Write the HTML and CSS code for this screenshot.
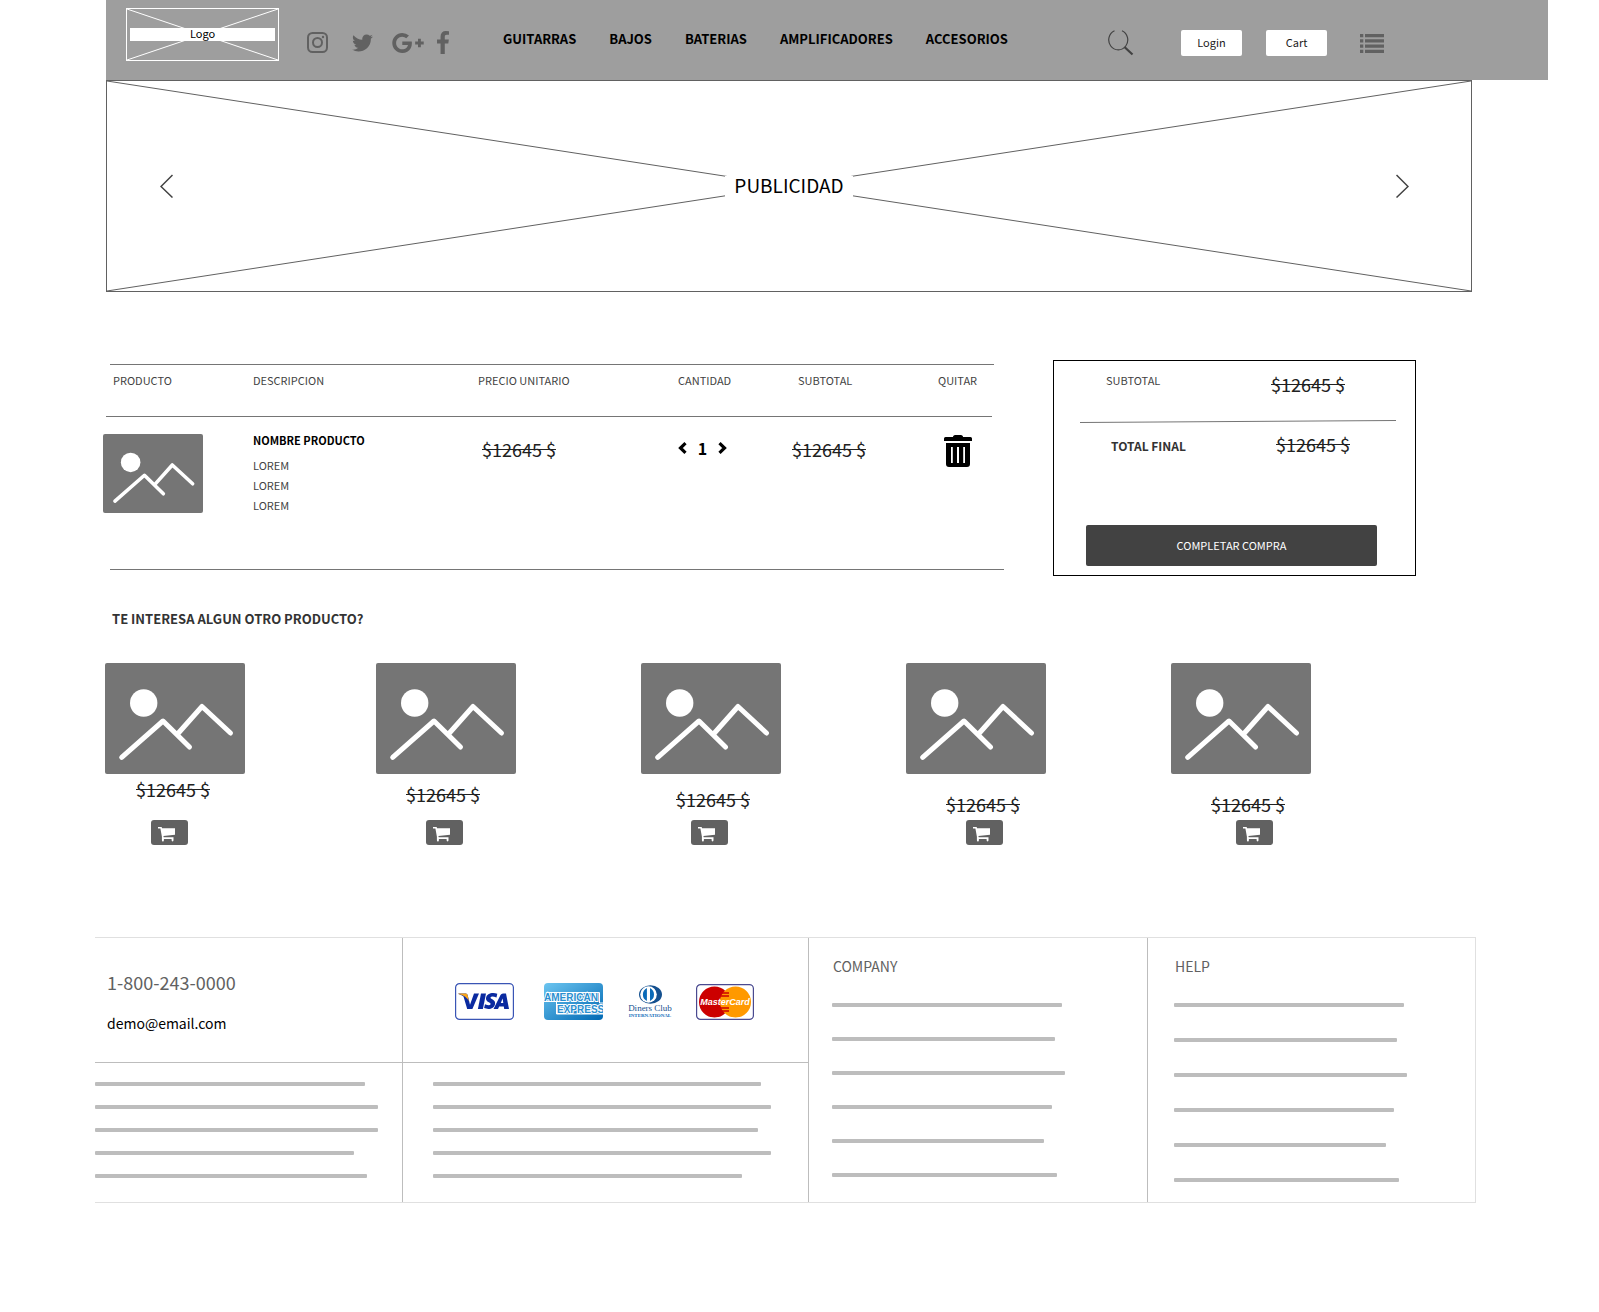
FILE: index.html
```html
<!DOCTYPE html>
<html lang="es">
<head>
<meta charset="utf-8">
<meta name="viewport" content="width=device-width, initial-scale=1">
<title>Carrito de compra</title>
<link rel="stylesheet" href="styles.css">
</head>
<body>
<svg class="sprite" aria-hidden="true">
  <symbol id="placeholder" viewBox="0 0 140 111" preserveAspectRatio="none">
    <rect width="140" height="111" fill="#757575"/>
    <circle cx="38.700" cy="40" r="13.700" fill="#fff"/>
    <path d="M16.700 94.300 58 58l26.500 26M73 70.500 97 43.500l28.500 26.500" fill="none" stroke="#fff" stroke-width="5" stroke-linecap="round" stroke-linejoin="round"/>
  </symbol>
  <symbol id="cart" viewBox="0 0 17 15">
    <path d="M0 0h3.600l.5 1.200H17v6.600L5.400 9l.3 1.200H15.500v2.600q.2 1.700-.9 1.700t-1-1.700v-.9H5.900v1q.1 1.700-1 1.700t-1-1.700V9.800L2.400 1.500H0z"/>
  </symbol>
</svg>

<header class="topbar">
  <a class="logo" href="#" aria-label="Logo">
    <svg class="logo-cross" viewBox="0 0 100 100" preserveAspectRatio="none" aria-hidden="true"><path d="M0 0 100 100M100 0 0 100"/></svg>
    <span class="logo-name">Logo</span>
  </a>
  <div class="social">
    <a href="#" aria-label="Instagram"><svg width="21" height="21" viewBox="0 0 21 21" fill="none" stroke="#616161" stroke-width="2"><rect x="1" y="1" width="19" height="19" rx="4.500"/><circle cx="10.500" cy="10.500" r="4.500"/><circle cx="16" cy="5" r="1.200" fill="#616161" stroke="none"/></svg></a>
    <a href="#" aria-label="Twitter"><svg width="21" height="18" viewBox="108 256 1576 1280" fill="#616161"><path d="M1684 408q-67 98-162 167 1 14 1 42 0 130-38 259.500t-115.500 248.500-184.500 210.500-258 146-323 54.500q-271 0-496-145 35 4 78 4 225 0 401-138-105-2-188-64.500t-114-159.500q33 5 61 5 43 0 85-11-112-23-185.500-111.500t-73.500-205.500v-4q68 38 146 41-66-44-105-115t-39-154q0-88 44-163 121 149 294.500 238.500t371.500 99.500q-8-38-8-74 0-134 94.500-228.500t228.500-94.500q140 0 236 102 109-21 205-78-37 115-142 178 93-10 186-50z"/></svg></a>
    <a href="#" aria-label="Google Plus"><svg width="32" height="20" viewBox="0 163 2304 1466" fill="#616161"><path d="M1437 913q0 208-87 370.500t-248 254-369 91.500q-149 0-285-58t-234-156-156-234-58-285 58-285 156-234 234-156 285-58q286 0 491 192l-199 191q-117-113-292-113-123 0-227.500 62t-165.500 168.500-61 232.500 61 232.500 165.500 168.500 227.500 62q83 0 152.500-23t114.500-57.500 78.500-78.500 49-83 21.500-74h-416v-252h692q12 63 12 122zm867-122v210h-209v209h-210v-209h-209v-210h209v-209h210v209h209z"/></svg></a>
    <a href="#" aria-label="Facebook"><svg width="12" height="23" viewBox="479 0 864 1664" fill="#616161"><path d="M1343 12v264h-157q-86 0-116 36t-30 108v189h293l-39 296h-254v759h-306v-759h-255v-296h255v-218q0-186 104-288.500t277-102.500q147 0 228 12z"/></svg></a>
  </div>
  <nav class="menu">
    <a href="#">GUITARRAS</a>
    <a href="#">BAJOS</a>
    <a href="#">BATERIAS</a>
    <a href="#">AMPLIFICADORES</a>
    <a href="#">ACCESORIOS</a>
  </nav>
  <div class="actions">
    <button class="icon-button" type="button" aria-label="Buscar"><svg width="26" height="26" viewBox="0 0 26 26" fill="none" stroke="#424242"><path d="M6.500.7A9.500 10 0 1 0 14 .7" stroke-width="1.200"/><path d="m16.500 17 8 7.500" stroke-width="2.200"/></svg></button>
    <button class="small-button" type="button">Login</button>
    <button class="small-button" type="button">Cart</button>
    <button class="icon-button" type="button" aria-label="Lista"><svg width="24" height="19" viewBox="0 0 24 19" fill="#616161"><path d="M0 0h3.300v3.300H0zM5 0h19v3.300H5zM0 5.300h3.300v3.300H0zM5 5.300h19v3.300H5zM0 10.500h3.300v3.300H0zM5 10.500h19v3.300H5zM0 15.700h3.300V19H0zM5 15.700h19V19H5z"/></svg></button>
  </div>
</header>

<section class="banner" aria-label="Publicidad">
  <svg class="banner-cross" viewBox="0 0 100 100" preserveAspectRatio="none" aria-hidden="true"><path d="M0 0 100 100M100 0 0 100"/></svg>
  <button class="icon-button banner-prev" type="button" aria-label="Anterior"><svg width="13" height="24" viewBox="0 0 13 24"><path d="M12.500 1 1 12.500l11.500 11"/></svg></button>
  <span class="banner-label">PUBLICIDAD</span>
  <button class="icon-button banner-next" type="button" aria-label="Siguiente"><svg width="13" height="24" viewBox="0 0 13 24"><path d="m.5 1 11.500 11.500L.5 23.500"/></svg></button>
</section>

<main>
  <div class="checkout">
    <table class="basket">
      <colgroup><col class="col-product"><col><col class="col-price"><col class="col-quantity"><col class="col-subtotal"><col class="col-remove"></colgroup>
      <thead>
        <tr>
          <th class="product">PRODUCTO</th>
          <th>DESCRIPCION</th>
          <th>PRECIO UNITARIO</th>
          <th class="quantity">CANTIDAD</th>
          <th class="subtotal">SUBTOTAL</th>
          <th class="remove">QUITAR</th>
        </tr>
      </thead>
      <tbody>
        <tr>
          <td class="product"><svg class="thumb" width="100" height="79" role="img" aria-label="Producto"><use href="#placeholder"/></svg></td>
          <td class="description"><strong>NOMBRE PRODUCTO</strong><ul><li>LOREM</li><li>LOREM</li><li>LOREM</li></ul></td>
          <td class="unit-price"><s class="price">$12645 $</s></td>
          <td class="quantity">
            <div class="stepper">
              <button class="icon-button" type="button" aria-label="Menos"><svg width="9" height="12" viewBox="0 0 9 12"><path d="M7.500 1.200 2.500 6l5 4.800" fill="none" stroke="#000" stroke-width="3.200"/></svg></button>
              <output>1</output>
              <button class="icon-button" type="button" aria-label="Más"><svg width="9" height="12" viewBox="0 0 9 12"><path d="M1.500 1.200 6.500 6l-5 4.800" fill="none" stroke="#000" stroke-width="3.200"/></svg></button>
            </div>
          </td>
          <td class="subtotal"><s class="price">$12645 $</s></td>
          <td class="remove"><button class="icon-button" type="button" aria-label="Quitar"><svg width="28" height="32" viewBox="0 0 28 32"><path d="M9 2V1.500Q9.500 0 11 0h6q1.500 0 2 1.500V2h7.500Q28 2 28 3.500V6H0V3.500Q0 2 1.500 2z"/><path fill-rule="evenodd" d="M2 8h24v21q0 3-3 3H5q-3 0-3-3zM7 12v16h1.800V12zm6 0v16h2V12zm6.200 0v16H21V12z"/></svg></button></td>
        </tr>
      </tbody>
    </table>

    <aside class="summary">
      <dl>
        <div class="summary-row"><dt>SUBTOTAL</dt><dd><s class="price">$12645 $</s></dd></div>
        <div class="summary-row total"><dt>TOTAL FINAL</dt><dd><s class="price">$12645 $</s></dd></div>
      </dl>
      <svg class="summary-rule" viewBox="0 0 316 3" preserveAspectRatio="none" aria-hidden="true"><path d="M0 2.500 316 .5"/></svg>
      <button class="buy" type="button">COMPLETAR COMPRA</button>
    </aside>
  </div>

  <h2>TE INTERESA ALGUN OTRO PRODUCTO?</h2>
  <ul class="products">
    <li class="card card-1"><svg class="thumb" width="140" height="111" role="img" aria-label="Producto"><use href="#placeholder"/></svg><div class="card-price"><s class="price">$12645 $</s></div><button class="add" type="button" aria-label="Agregar al carrito"><svg width="17" height="15"><use href="#cart"/></svg></button></li>
    <li class="card card-2"><svg class="thumb" width="140" height="111" role="img" aria-label="Producto"><use href="#placeholder"/></svg><div class="card-price"><s class="price">$12645 $</s></div><button class="add" type="button" aria-label="Agregar al carrito"><svg width="17" height="15"><use href="#cart"/></svg></button></li>
    <li class="card card-3"><svg class="thumb" width="140" height="111" role="img" aria-label="Producto"><use href="#placeholder"/></svg><div class="card-price"><s class="price">$12645 $</s></div><button class="add" type="button" aria-label="Agregar al carrito"><svg width="17" height="15"><use href="#cart"/></svg></button></li>
    <li class="card card-4"><svg class="thumb" width="140" height="111" role="img" aria-label="Producto"><use href="#placeholder"/></svg><div class="card-price"><s class="price">$12645 $</s></div><button class="add" type="button" aria-label="Agregar al carrito"><svg width="17" height="15"><use href="#cart"/></svg></button></li>
    <li class="card card-5"><svg class="thumb" width="140" height="111" role="img" aria-label="Producto"><use href="#placeholder"/></svg><div class="card-price"><s class="price">$12645 $</s></div><button class="add" type="button" aria-label="Agregar al carrito"><svg width="17" height="15"><use href="#cart"/></svg></button></li>
  </ul>
</main>

<footer class="footer">
  <div class="contact">
    <a class="phone" href="tel:18002430000">1-800-243-0000</a>
    <a class="email" href="mailto:demo@email.com">demo@email.com</a>
  </div>
  <div class="payments">
    <svg width="59" height="37" viewBox="0 0 59 37" role="img" aria-label="Visa">
      <rect x=".6" y=".6" width="57.800" height="35.800" rx="4" fill="#fff" stroke="#3a55b5" stroke-width="1.200"/>
      <path d="M3.500 10.500h7.300q1.600 0 1.900 1.800l2.300 9.500 4-11.300h5L17.400 26h-5.200L8.500 13.500Q7 12 3.500 11z" fill="#0a2aa0"/>
      <path d="M3.500 10.500h7.300q1.600 0 1.900 1.800l1.200 6Q11 12.500 3.500 11z" fill="#f9a51a"/>
      <path d="M26 10.500h5L27.900 26h-5z" fill="#0a2aa0"/>
      <path d="M41.500 14.600q-5-2-6 0c-.6 1.800 5 1.800 4.600 5.800-.5 6-7.300 6.300-11 4.700l.9-3.900q4.600 2 5.600.1c.6-2-5-2-4.600-6 .5-5.300 7-6 11.300-4.500z" fill="#0a2aa0"/>
      <path fill-rule="evenodd" d="M38.500 26l7-14q.8-1.500 2.500-1.500h3L54 26h-4.800l-.4-2.500h-4.600L43 26zm7.300-6h2.500l-.7-4.500z" fill="#0a2aa0"/>
    </svg>
    <svg width="59" height="37" viewBox="0 0 59 37" role="img" aria-label="American Express">
      <defs><linearGradient id="amex" x1="0" y1="0" x2="1" y2="1"><stop offset="0" stop-color="#6cc5f0"/><stop offset="1" stop-color="#0068b3"/></linearGradient></defs>
      <rect width="59" height="37" rx="4" fill="url(#amex)"/>
      <path d="M5 9.500H55.500v10.500H59M0 18.500H12.500V31H59" fill="none" stroke="#fff"/>
      <text class="amex-text" x="0" y="18">AMERICAN</text>
      <text class="amex-text" x="13" y="30">EXPRESS</text>
    </svg>
    <svg width="45" height="33" viewBox="0 0 45 33" role="img" aria-label="Diners Club International">
      <ellipse cx="22.500" cy="9.500" rx="11.500" ry="9.300" fill="#14508f"/>
      <circle cx="20.500" cy="9.500" r="8.300" fill="#fff"/>
      <path d="M18.900 3v13q-4-2-4-6.500t4-6.500zM22 3v13q4-2 4-6.500T22 3z" fill="#0a6ab8"/>
      <text class="diners-text" x="22" y="26">Diners Club</text>
      <text class="diners-sub" x="22" y="32">INTERNATIONAL</text>
    </svg>
    <svg width="58" height="37" viewBox="0 0 58 37" role="img" aria-label="MasterCard">
      <rect x=".6" y="1.600" width="56.800" height="34.800" rx="4" fill="#fff" stroke="#4a4a90" stroke-width="1.200"/>
      <circle cx="18.500" cy="19" r="15.500" fill="#c00"/>
      <circle cx="39.500" cy="19" r="15.500" fill="#f90"/>
      <path d="M26 10h7M25 13h8M24 25h9M25 28h8" stroke="#c00" stroke-width="1.500"/>
      <text class="mc-text" x="29" y="22">MasterCard</text>
    </svg>
  </div>
  <div class="lines about"><i style="width:270px"></i><i style="width:283px"></i><i style="width:283px"></i><i style="width:259px"></i><i style="width:272px"></i></div>
  <div class="lines legal"><i style="width:328px"></i><i style="width:338px"></i><i style="width:325px"></i><i style="width:338px"></i><i style="width:309px"></i></div>
  <section class="links company">
    <h3>COMPANY</h3>
    <div class="lines"><i style="width:230px"></i><i style="width:223px"></i><i style="width:233px"></i><i style="width:220px"></i><i style="width:212px"></i><i style="width:225px"></i></div>
  </section>
  <section class="links help">
    <h3>HELP</h3>
    <div class="lines"><i style="width:230px"></i><i style="width:223px"></i><i style="width:233px"></i><i style="width:220px"></i><i style="width:212px"></i><i style="width:225px"></i></div>
  </section>
</footer>
</body>
</html>
```
FILE: styles.css
```css
* { box-sizing: border-box; }

body {
  margin: 0;
  background: #fff;
  color: #424242;
  font: 11px/16px "Noto Sans CJK SC", "Noto Sans", sans-serif;
}

svg { display: block; }
a { color: inherit; text-decoration: none; }
ul, dl, dd, h2, h3 { margin: 0; padding: 0; }
ul { list-style: none; }
button { font: inherit; cursor: pointer; }

.sprite { position: absolute; width: 0; height: 0; }

.icon-button {
  display: block;
  padding: 0;
  border: 0;
  background: none;
}

.price {
  display: inline-block;
  color: #212121;
  font-size: 18px;
  line-height: 24px;
  white-space: nowrap;
}

.thumb { border-radius: 2px; }

/* Top bar */
.topbar {
  display: flex;
  align-items: flex-start;
  min-height: 80px;
  margin: 0 51px 0 106px;
  padding: 0 164px 0 20px;
  background: #9e9e9e;
}

.logo {
  position: relative;
  display: flex;
  align-items: center;
  width: 153px;
  height: 53px;
  margin-top: 8px;
  padding: 0 3px;
  border: 1px solid #fff;
}

.logo-cross {
  position: absolute;
  inset: 0;
  width: 100%;
  height: 100%;
}

.logo-cross path {
  fill: none;
  stroke: #fff;
  vector-effect: non-scaling-stroke;
}

.logo-name {
  position: relative;
  flex: 1;
  height: 13px;
  background: #fff;
  color: #000;
  line-height: 11px;
  text-align: center;
}

.social {
  display: grid;
  grid-template-columns: 45px 40px 45px 12px;
  align-items: center;
  margin: 31px 0 0 28px;
}

.menu {
  display: flex;
  gap: 33px;
  margin: 29px 0 0 54px;
  color: #000;
  font-size: 13px;
  font-weight: 700;
  line-height: 20px;
}

.actions {
  display: grid;
  grid-template-columns: 73px 61px 85px 57px;
  align-items: center;
  margin: 30px 0 0 auto;
}

.actions .small-button + .small-button { margin-left: 24px; }
.actions .icon-button:last-child { justify-self: end; }

.small-button {
  height: 26px;
  padding: 0 0 2px;
  border: 0;
  border-radius: 2px;
  background: #fff;
  color: #212121;
}

/* Banner */
.banner {
  position: relative;
  display: grid;
  grid-template-columns: 1fr auto 1fr;
  align-items: center;
  min-height: 212px;
  margin: 0 127px 0 106px;
  border: 1px solid #616161;
}

.banner-cross {
  position: absolute;
  inset: 0;
  width: 100%;
  height: 100%;
}

.banner-cross path {
  fill: none;
  stroke: #616161;
  vector-effect: non-scaling-stroke;
}

.banner .icon-button,
.banner-label { position: relative; }

.banner-prev { justify-self: start; margin-left: 53px; }
.banner-next { justify-self: end; margin-right: 62px; }

.banner .icon-button path {
  fill: none;
  stroke: #424242;
  stroke-width: 1.500;
}

.banner-label {
  height: 21px;
  padding: 0 9px;
  background: #fff;
  color: #000;
  font-size: 19px;
  line-height: 18px;
}

/* Basket */
.checkout {
  display: grid;
  grid-template-columns: 1fr 363px;
  gap: 49px;
  align-items: start;
  margin: 68px 183px 0 103px;
}

.basket {
  width: 100%;
  margin-top: 4px;
  border-collapse: collapse;
  table-layout: fixed;
  background:
    linear-gradient(#757575, #757575) 7px 0 / calc(100% - 17px) 1px no-repeat,
    linear-gradient(#757575, #757575) 3px 52px / calc(100% - 15px) 1px no-repeat,
    linear-gradient(#757575, #757575) 7px 100% / calc(100% - 7px) 1px no-repeat;
}

.col-product { width: 150px; }
.col-price { width: 196px; }
.col-quantity { width: 116px; }
.col-subtotal { width: 136px; }
.col-remove { width: 78px; }

.basket th,
.basket td {
  padding: 0;
  text-align: left;
  vertical-align: top;
}

.basket th {
  height: 53px;
  padding-top: 8px;
  font-weight: 400;
}

.basket td { height: 153px; }

.basket th.product { padding-left: 10px; }
.basket td.product { padding-top: 17px; }
.basket td.description { padding-top: 13px; line-height: 20px; }
.description strong { display: block; margin-bottom: 5px; color: #000; }
.basket td.unit-price { padding: 20px 0 0 4px; }
.basket .quantity { padding-left: 4px; }
.basket td.quantity { padding-top: 22px; }
.basket th.subtotal { padding-left: 8px; }
.basket td.subtotal { padding: 20px 0 0 2px; }
.basket th.remove { padding-left: 12px; }
.basket td.remove { padding: 18px 0 0 18px; }

.stepper {
  display: flex;
  align-items: center;
  gap: 9px;
  height: 18px;
}

.stepper output {
  width: 13px;
  color: #000;
  font-size: 16px;
  font-weight: 700;
  text-align: center;
}

/* Order summary */
.summary {
  display: grid;
  grid-template-rows: auto 1fr;
  min-height: 216px;
  border: 1px solid #000;
}

.summary dl,
.summary-rule { grid-area: 1 / 1; }

.summary-row {
  display: flex;
  justify-content: space-between;
  padding: 11px 70px 0 52px;
}

.summary-row.total {
  padding: 36px 65px 0 57px;
  color: #333;
  font-size: 12px;
  font-weight: 700;
}

.total dt { line-height: 28px; }
.total .price { font-weight: 400; }

.summary-rule {
  width: calc(100% - 45px);
  height: 3px;
  margin: 59px 0 0 26px;
}

.summary-rule path {
  fill: none;
  stroke: #757575;
  vector-effect: non-scaling-stroke;
}

.buy {
  align-self: end;
  height: 41px;
  margin: 0 38px 9px 32px;
  padding: 0 0 2px;
  border: 0;
  border-radius: 2px;
  background: #424242;
  color: #fff;
}

/* Related products */
h2 {
  margin: 33px 183px 0 112px;
  color: #333;
  font-size: 13px;
  line-height: 20px;
}

.products {
  display: grid;
  grid-template-columns: 271fr 265fr 265fr 265fr 265fr;
  margin: 34px 163px 0 105px;
}

.card { --price-top: 18px; --price-left: 40px; --cart-left: 50px; }
.card-1 { --price-top: 3px; --price-left: 31px; --cart-left: 46px; }
.card-2 { --price-top: 8px; --price-left: 30px; }
.card-3 { --price-top: 13px; --price-left: 35px; }
.card-4 { --cart-left: 60px; }
.card-5 { --cart-left: 65px; }

.card-price {
  height: 46px;
  padding: var(--price-top) 0 0 var(--price-left);
}

.add {
  display: block;
  width: 37px;
  height: 25px;
  margin-left: var(--cart-left);
  padding: 3px 0 0 7px;
  border: 0;
  border-radius: 3px;
  background: #616161;
  fill: #fff;
}

/* Footer */
.footer {
  display: grid;
  grid-template-columns: 308fr 406fr 339fr 327fr;
  grid-template-rows: 125px 139px;
  margin: 92px 123px 0 95px;
  border: 1px solid #e0e0e0;
  border-left: 0;
}

.contact,
.payments { border-bottom: 1px solid #bdbdbd; }

.contact,
.payments,
.about,
.legal,
.company { border-right: 1px solid #bdbdbd; }

.contact {
  display: flex;
  flex-direction: column;
  gap: 19px;
  padding: 32px 0 0 12px;
}

.phone {
  color: #616161;
  font-size: 18px;
  line-height: 24px;
}

.email {
  color: #000;
  font-size: 14px;
  line-height: 20px;
}

.payments {
  display: grid;
  grid-template-columns: 89px 84px 68px 58px;
  align-items: center;
  padding: 2px 0 0 52px;
}

.lines {
  display: grid;
  align-content: start;
  row-gap: 19px;
}

.lines i {
  display: block;
  height: 4px;
  border-radius: 1px;
  background: #bdbdbd;
}

.about { grid-area: 2 / 1; padding-top: 19px; }
.legal { grid-area: 2 / 2; padding: 19px 0 0 30px; }
.links { padding: 18px 0 0 23px; }
.company { grid-area: 1 / 3 / 3 / 4; }
.help { grid-area: 1 / 4 / 3 / 5; padding-left: 26px; }

.links h3 {
  margin-bottom: 27px;
  padding-left: 1px;
  color: #616161;
  font-size: 14px;
  font-weight: 400;
  line-height: 20px;
}

.company .lines { row-gap: 30px; }
.help .lines { row-gap: 31px; }

.amex-text {
  fill: #2a8fd0;
  stroke: #fff;
  stroke-width: 2;
  paint-order: stroke;
  font: 700 10px "Liberation Sans", sans-serif;
}

.diners-text {
  fill: #14508f;
  font: 9px "Liberation Serif", serif;
  text-anchor: middle;
}

.diners-sub {
  fill: #0a6ab8;
  font: 700 5px "Liberation Serif", serif;
  text-anchor: middle;
}

.mc-text {
  fill: #fff;
  font: italic 700 9px "Liberation Sans", sans-serif;
  text-anchor: middle;
}
```
